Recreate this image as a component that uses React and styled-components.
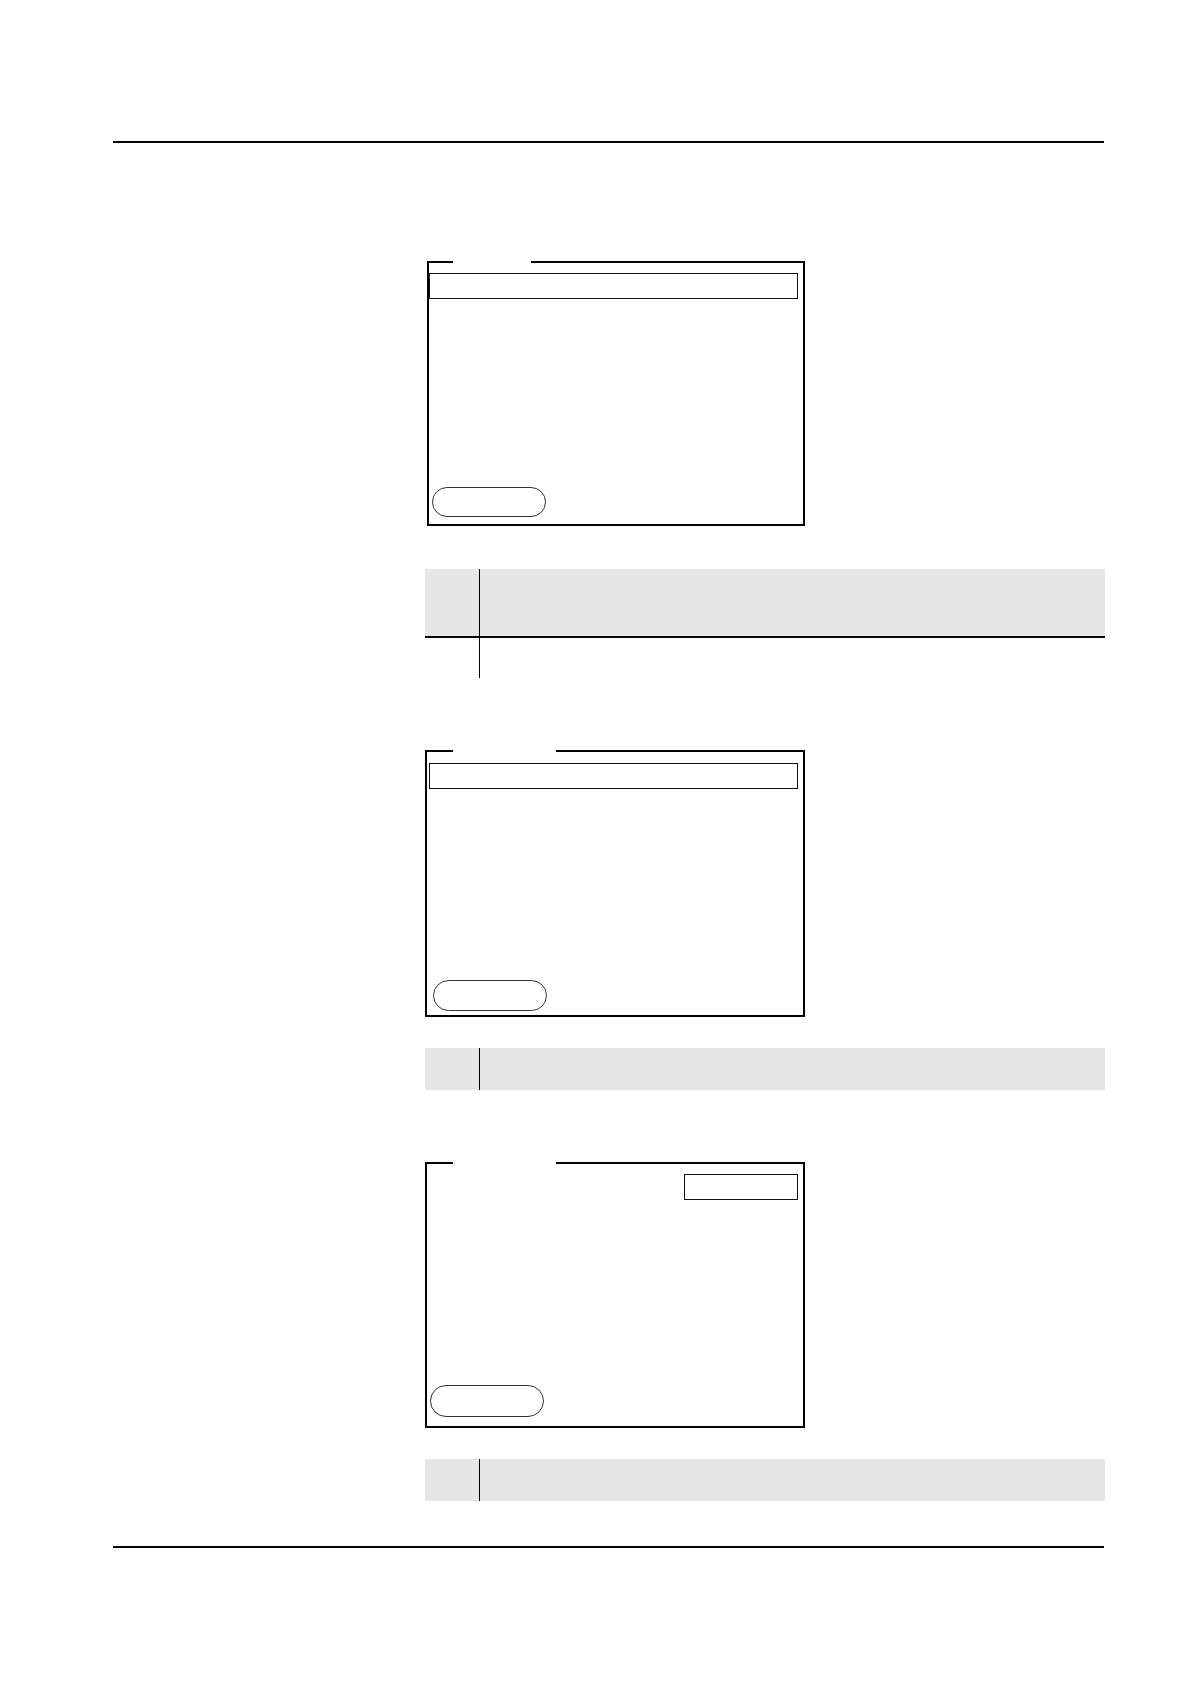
import React from 'react'
import styled, { createGlobalStyle } from 'styled-components'

const GlobalStyle = createGlobalStyle`
  html,
  body {
    margin: 0;
    padding: 0;
    background: #fff;
  }

  body {
    font-family: 'Liberation Sans', Arial, sans-serif;
    color: #000;
  }
`

const Page = styled.div`
  display: flex;
  flex-direction: column;
  width: 1190px;
  min-height: 1684px;
  padding-top: 141px;
  box-sizing: border-box;
`

const Rule = styled.hr`
  width: 991px;
  height: 2px;
  margin: ${(p) => p.$top || 0}px 0 0 113px;
  border: 0;
  background: #000;
`

const Column = styled.main`
  display: flex;
  flex-direction: column;
  width: 680px;
  margin-left: 425px;
`

/* device display mock-up */
const Screen = styled.section`
  display: flex;
  flex-direction: column;
  width: ${(p) => p.$width}px;
  height: ${(p) => p.$height}px;
  margin: ${(p) => p.$gap}px 0 0 ${(p) => p.$indent || 0}px;
  padding: 0 5px 0 0;
  box-sizing: border-box;
  border: 2px solid #000;
  border-top: 0;
`

const TopEdge = styled.div`
  display: flex;
  height: 2px;
  margin: 0 -7px 0 -2px;
`

const EdgeLine = styled.span`
  flex: ${(p) => (p.$w ? 'none' : 1)};
  width: ${(p) => p.$w || 0}px;
  background: #000;
`

const EdgeGap = styled.span`
  flex: none;
  width: ${(p) => p.$w}px;
`

const TitleBar = styled.div`
  align-self: ${(p) => (p.$compact ? 'flex-end' : 'stretch')};
  width: ${(p) => (p.$compact ? '114px' : 'auto')};
  height: 26px;
  margin: ${(p) => p.$top}px 0 0 ${(p) => p.$left || 0}px;
  box-sizing: border-box;
  border: 1px solid #111;
`

const SoftKey = styled.div`
  width: 114px;
  height: ${(p) => p.$h}px;
  margin: auto 0 ${(p) => p.$bottom}px ${(p) => p.$left}px;
  box-sizing: border-box;
  border: 1px solid #333;
  border-radius: 16px;
`

const StepTable = styled.div`
  display: flex;
  flex-direction: column;
  width: 680px;
  margin-top: ${(p) => p.$gap}px;
`

const StepRow = styled.div`
  display: flex;
  height: ${(p) => p.$h}px;
  box-sizing: border-box;
  background: ${(p) => (p.$shaded ? '#e6e6e6' : 'transparent')};
  border-bottom: ${(p) => (p.$ruled ? '2px solid #000' : '0')};
`

const StepNo = styled.div`
  flex: none;
  width: 54px;
  border-right: 1px solid #000;
`

const StepText = styled.div`
  flex: 1;
`

export default function App() {
  return (
    <>
      <GlobalStyle />
      <Page>
        <Rule />
        <Column>
          <Screen $gap={118} $indent={2} $width={378} $height={265}>
            <TopEdge>
              <EdgeLine $w={26} />
              <EdgeGap $w={78} />
              <EdgeLine />
            </TopEdge>
            <TitleBar $top={10} />
            <SoftKey $h={30} $left={3} $bottom={7} />
          </Screen>

          <StepTable $gap={43}>
            <StepRow $h={69} $shaded $ruled>
              <StepNo />
              <StepText />
            </StepRow>
            <StepRow $h={40}>
              <StepNo />
              <StepText />
            </StepRow>
          </StepTable>

          <Screen $gap={72} $width={380} $height={267}>
            <TopEdge>
              <EdgeLine $w={28} />
              <EdgeGap $w={103} />
              <EdgeLine />
            </TopEdge>
            <TitleBar $top={11} $left={2} />
            <SoftKey $h={31} $left={6} $bottom={4} />
          </Screen>

          <StepTable $gap={31}>
            <StepRow $h={42} $shaded>
              <StepNo />
              <StepText />
            </StepRow>
          </StepTable>

          <Screen $gap={72} $width={380} $height={266}>
            <TopEdge>
              <EdgeLine $w={28} />
              <EdgeGap $w={103} />
              <EdgeLine />
            </TopEdge>
            <TitleBar $top={10} $compact />
            <SoftKey $h={32} $left={3} $bottom={9} />
          </Screen>

          <StepTable $gap={31}>
            <StepRow $h={42} $shaded>
              <StepNo />
              <StepText />
            </StepRow>
          </StepTable>
        </Column>
        <Rule $top={45} />
      </Page>
    </>
  )
}
